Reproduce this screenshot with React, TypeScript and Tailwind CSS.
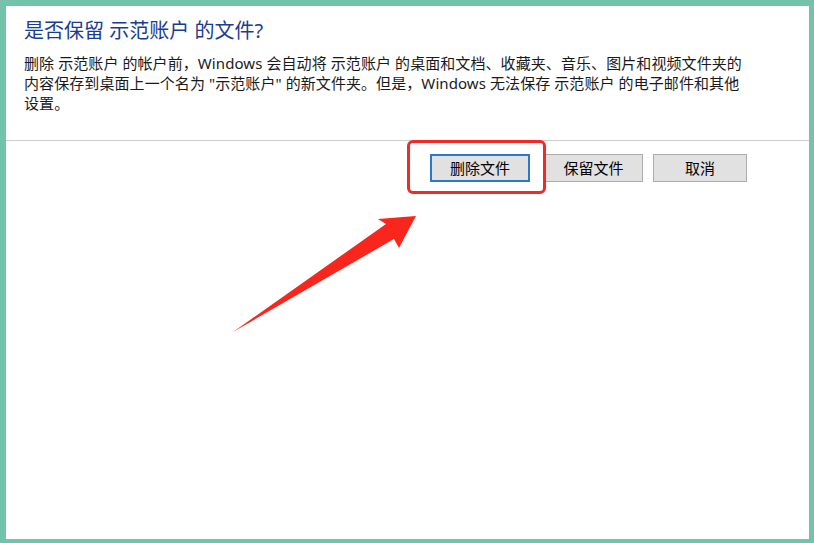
import React from "react";

export default function App() {
  const font = { fontFamily: '"Noto Sans", "Noto Sans CJK SC", sans-serif' };
  return (
    <div className="w-[814px] h-[543px] bg-[#73c2aa] pt-[6px] pl-[6px] pr-[5px] pb-[4px]" style={font}>
      <div className="relative w-full h-full bg-white flex flex-col">
        <div className="pl-[18px] pt-[11px]">
          <div className="text-[20px] leading-[28px] text-[#1a3c92] whitespace-nowrap">是否保留 示范账户 的文件?</div>
          <div className="mt-[8px] text-[15px] leading-[20px] text-[#1a1a1a] whitespace-nowrap tracking-[0.08px]">
            删除 示范账户 的帐户前，Windows 会自动将 示范账户 的桌面和文档、收藏夹、音乐、图片和视频文件夹的
            <br />
            内容保存到桌面上一个名为 "示范账户" 的新文件夹。但是，Windows 无法保存 示范账户 的电子邮件和其他
            <br />
            设置。
          </div>
        </div>
        <div className="mt-[27px] h-px bg-[#cfcfcf]" />
        <div className="flex justify-end pr-[62px] pt-[13px]">
          <button className="w-[100px] h-[28px] bg-[#e1e1e1] border-2 border-[#2b79c9] text-[15px] text-black leading-none">删除文件</button>
          <button className="ml-[14px] w-[99px] h-[28px] bg-[#e1e1e1] border border-[#adadad] text-[15px] text-black leading-none">保留文件</button>
          <button className="ml-[10px] w-[94px] h-[28px] bg-[#e1e1e1] border border-[#adadad] text-[15px] text-black leading-none">取消</button>
        </div>
        <div className="absolute left-[401px] top-[134px] w-[139px] h-[54px] border-[3px] border-[#f02a26] rounded-[6px]" />
        <svg className="absolute left-0 top-0" width="803" height="533" viewBox="6 6 803 533">
          <polygon points="416,216 378,219 386,224 233,332 394,239 399,248" fill="#f8261c" />
        </svg>
      </div>
    </div>
  );
}
